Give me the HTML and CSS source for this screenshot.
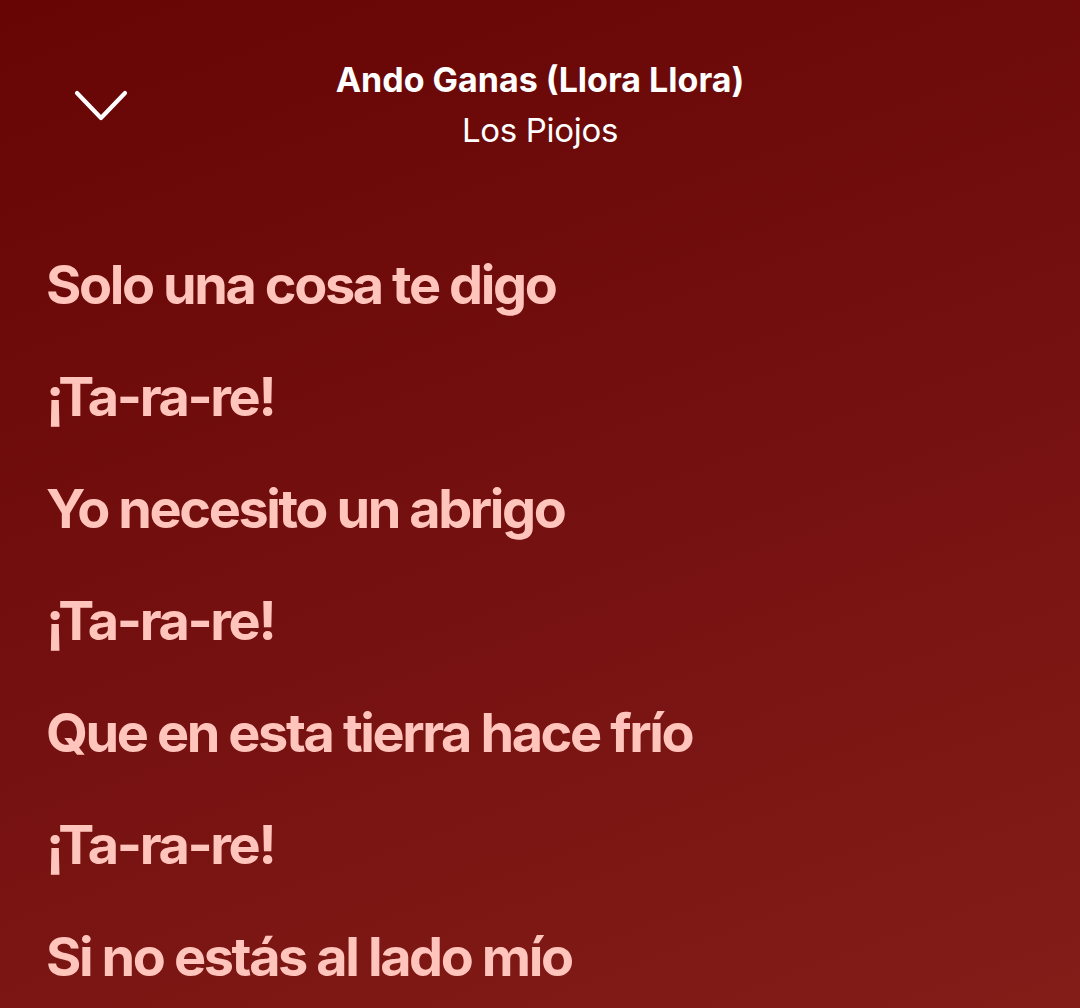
FILE: index.html
```html
<!DOCTYPE html>
<html lang="es">
<head>
<meta charset="utf-8">
<link rel="stylesheet" href="styles.css">
</head>
<body>
<div class="screen">
  <header class="header">
    <button class="back" aria-label="Cerrar">
      <svg width="56" height="32" viewBox="0 0 56 32"><polyline points="3,3 27,28 51,3" fill="none" stroke="#fff" stroke-width="4.2" stroke-linecap="round" stroke-linejoin="round"/></svg>
    </button>
    <div class="meta">
      <div class="title">Ando Ganas (Llora Llora)</div>
      <div class="artist">Los Piojos</div>
    </div>
  </header>
  <main class="lyrics">
    <p class="line">Solo una cosa te digo</p>
    <p class="line">¡Ta-ra-re!</p>
    <p class="line">Yo necesito un abrigo</p>
    <p class="line">¡Ta-ra-re!</p>
    <p class="line">Que en esta tierra hace frío</p>
    <p class="line">¡Ta-ra-re!</p>
    <p class="line">Si no estás al lado mío</p>
  </main>
</div>
</body>
</html>
```
FILE: styles.css
```css
html, body {
  margin: 0;
  padding: 0;
}
body {
  width: 1080px;
  height: 1008px;
  overflow: hidden;
  background: linear-gradient(160deg, #670404 0%, #741010 50%, #831d18 100%);
  font-family: "Inter", "Noto Sans", sans-serif;
}
.screen {
  display: flex;
  flex-direction: column;
  height: 1008px;
  overflow: hidden;
}
.header {
  position: relative;
  flex-shrink: 0;
  height: 180px;
  display: flex;
  justify-content: center;
}
.back {
  position: absolute;
  left: 74px;
  top: 90px;
  background: none;
  border: 0;
  padding: 0;
  width: 56px;
  height: 32px;
}
.back svg { display: block; }
.meta {
  display: flex;
  flex-direction: column;
  align-items: center;
  padding-top: 58px;
  color: #fff;
}
.title {
  font-weight: 700;
  font-size: 34px;
  line-height: 44px;
  letter-spacing: 0;
}
.artist {
  font-weight: 400;
  font-size: 33px;
  line-height: 44px;
  margin-top: 6px;
  letter-spacing: -0.3px;
}
.lyrics {
  flex-shrink: 0;
  padding: 49px 0 0 46px;
  display: flex;
  flex-direction: column;
}
.line {
  margin: 0;
  color: #ffc4bb;
  font-weight: 700;
  font-size: 54px;
  line-height: 112px;
  letter-spacing: -2.4px;
  white-space: nowrap;
}
```
